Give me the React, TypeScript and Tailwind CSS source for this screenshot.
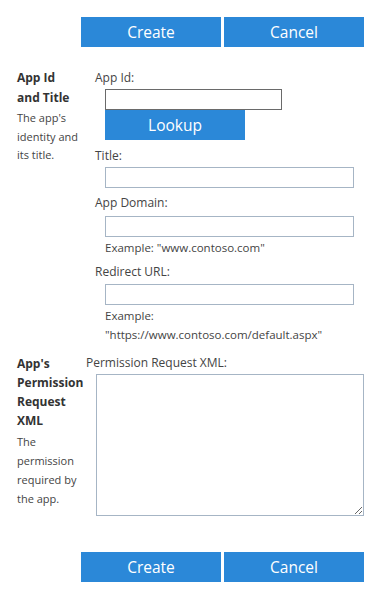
import React from "react";

const font = { fontFamily: '"Open Sans", "Noto Sans", sans-serif' };

function Buttons() {
  return (
    <div className="flex gap-[3px] pl-[81px]">
      <button className="w-[140px] h-[30px] bg-[#2b88d8] text-white text-[15.5px] leading-[30px]">Create</button>
      <button className="w-[140px] h-[30px] bg-[#2b88d8] text-white text-[15.5px] leading-[30px]">Cancel</button>
    </div>
  );
}

export default function App() {
  return (
    <div className="w-[384px] h-[600px] bg-white text-[#444] pt-[17px]" style={font}>
      <Buttons />

      {/* Section 1 */}
      <div className="flex mt-[21px]">
        <div className="w-[95px] pl-[17px] shrink-0">
          <div className="text-[12px] font-bold text-[#333] leading-[19.5px]">
            App Id<br />and Title
          </div>
          <div className="text-[11px] leading-[18.5px] mt-[2px] whitespace-nowrap">
            The app's<br />identity and<br />its title.
          </div>
        </div>
        <div className="flex flex-col">
          <div className="text-[12px] leading-[20px]">App Id:</div>
          <input className="ml-[10px] mt-[1px] w-[177px] h-[21px] border border-[#6a6a6a] outline-none" />
          <button className="ml-[10px] w-[140px] h-[30px] bg-[#2b88d8] text-white text-[15.5px] leading-[30px]">Lookup</button>

          <div className="text-[12px] leading-[20px] mt-[6px]">Title:</div>
          <input className="ml-[10px] mt-[1px] w-[249px] h-[21px] border border-[#a6b5c5] outline-none" />

          <div className="text-[12px] leading-[20px] mt-[5px]">App Domain:</div>
          <input className="ml-[10px] mt-[3px] w-[249px] h-[21px] border border-[#a6b5c5] outline-none" />
          <div className="ml-[10px] text-[11.5px] leading-[19px] mt-[1px]">Example: "www.contoso.com"</div>

          <div className="text-[12px] leading-[20px] mt-[5px]">Redirect URL:</div>
          <input className="ml-[10px] mt-[2px] w-[249px] h-[21px] border border-[#a6b5c5] outline-none" />
          <div className="ml-[10px] text-[11.5px] leading-[19px] mt-[1px]">
            Example:<br />"https://www.contoso.com/default.aspx"
          </div>
        </div>
      </div>

      {/* Section 2 */}
      <div className="flex mt-[9px]">
        <div className="w-[86px] pl-[17px] shrink-0 pt-[1px]">
          <div className="text-[12px] font-bold text-[#333] leading-[19px] whitespace-nowrap">
            App's<br />Permission<br />Request<br />XML
          </div>
          <div className="text-[11px] leading-[19px] mt-[2px] whitespace-nowrap">
            The<br />permission<br />required by<br />the app.
          </div>
        </div>
        <div className="flex flex-col">
          <div className="text-[12px] leading-[20px]">Permission Request XML:</div>
          <textarea className="ml-[10px] mt-[1px] w-[268px] h-[142px] border border-[#a6b5c5] outline-none" />
        </div>
      </div>

      <div className="mt-[36px]">
        <Buttons />
      </div>
    </div>
  );
}
